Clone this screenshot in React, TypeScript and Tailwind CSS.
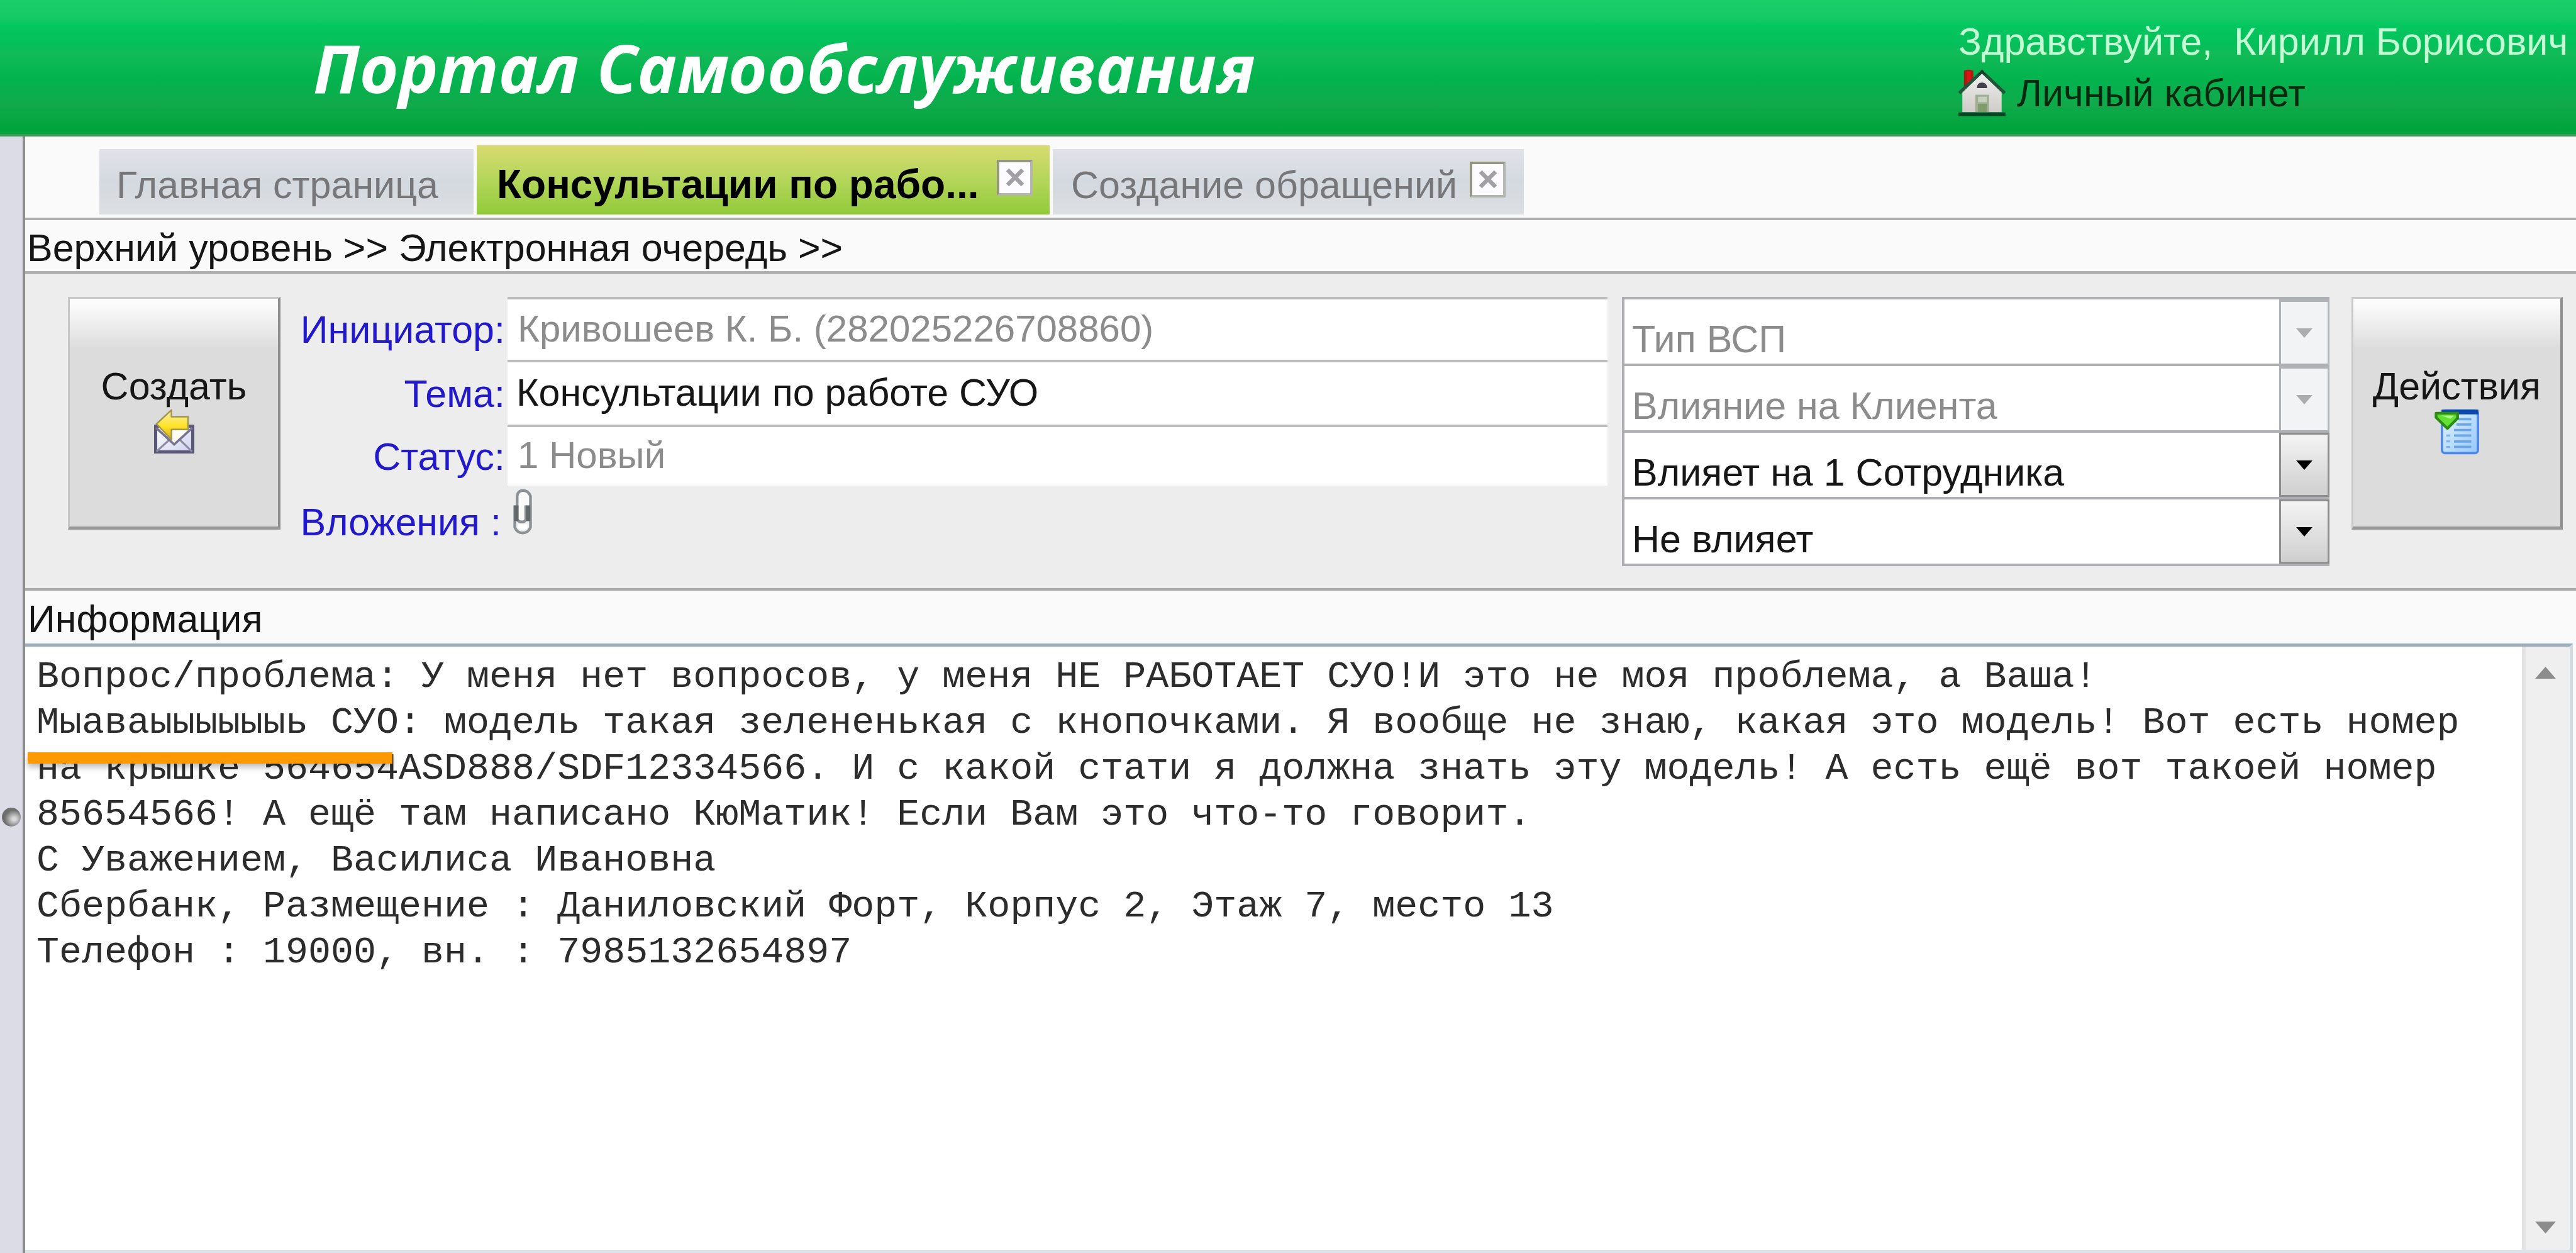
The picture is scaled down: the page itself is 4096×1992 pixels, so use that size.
import React from "react";

const MESSAGE = [
  "Вопрос/проблема: У меня нет вопросов, у меня НЕ РАБОТАЕТ СУО!И это не моя проблема, а Ваша!",
  "Мыаваыыыыыыь СУО: модель такая зелененькая с кнопочками. Я вообще не знаю, какая это модель! Вот есть номер",
  "на крышке 564654ASD888/SDF12334566. И с какой стати я должна знать эту модель! А есть ещё вот такоей номер",
  "85654566! А ещё там написано КюМатик! Если Вам это что-то говорит.",
  "С Уважением, Василиса Ивановна",
  "Сбербанк, Размещение : Даниловский Форт, Корпус 2, Этаж 7, место 13",
  "Телефон : 19000, вн. : 7985132654897",
].join("\n");

function HouseIcon() {
  return (
    <svg viewBox="0 0 120 122" className="h-[77px] w-[75px] shrink-0" aria-hidden="true">
      <defs>
        <linearGradient id="wall" x1="0" y1="0" x2="0" y2="1">
          <stop offset="0" stopColor="#f0f0f0" />
          <stop offset="1" stopColor="#cfcbc7" />
        </linearGradient>
      </defs>
      <path d="M14 5q10-6 24 0v26L14 52Z" fill="#a81c12" />
      <path d="M22 6h10v24L22 40Z" fill="#d81414" />
      <path d="M60 12 110 60v50H10V60Z" fill="url(#wall)" />
      <path d="M2 62 60 7l58 55" fill="none" stroke="#24543a" strokeWidth="8" />
      <path d="M60 3 48 16l12-5 12 5Z" fill="#103d28" />
      <path d="M47 49q0-14 13-14t13 14Z" fill="#45404c" />
      <path d="M43 66h35v44H43Z" fill="#9fae94" />
      <path d="M50 71h22v14H50Z" fill="#c3d2b9" />
      <path d="M50 89h22v21H50Z" fill="#7f9d6c" />
      <path d="M0 111h120v9H0Z" fill="#06451f" />
    </svg>
  );
}

function MailReplyIcon() {
  return (
    <svg viewBox="0 0 102 113" className="h-[71px] w-[64px]" aria-hidden="true">
      <defs>
        <linearGradient id="arrow" x1="0" y1="0" x2="0" y2="1">
          <stop offset="0" stopColor="#f7efb0" />
          <stop offset="0.55" stopColor="#ffe326" />
          <stop offset="1" stopColor="#d9a814" />
        </linearGradient>
        <linearGradient id="paper" x1="0" y1="0" x2="1" y2="1">
          <stop offset="0" stopColor="#ffffff" />
          <stop offset="1" stopColor="#cfd2ee" />
        </linearGradient>
      </defs>
      <rect x="4" y="44" width="94" height="65" fill="url(#paper)" stroke="#5a5676" strokeWidth="8" />
      <path d="M6 108 39 78M96 108 65 78" stroke="#8c8ca6" strokeWidth="5" />
      <path d="M5 48 51 90 97 48" fill="#fffdf6" stroke="#77748f" strokeWidth="6" />
      <path d="M6 38 44 3v17h42v32H44v26Z" fill="url(#arrow)" stroke="#a09650" strokeWidth="4" strokeLinejoin="round" />
    </svg>
  );
}

function ListIcon() {
  return (
    <svg viewBox="0 0 114 117" className="h-[73px] w-[71px]" aria-hidden="true">
      <defs>
        <linearGradient id="sheet" x1="0" y1="0" x2="1" y2="1">
          <stop offset="0" stopColor="#e6f4ff" />
          <stop offset="1" stopColor="#93c8ff" />
        </linearGradient>
      </defs>
      <rect x="19" y="4" width="92" height="109" rx="8" fill="url(#sheet)" stroke="#5287ea" strokeWidth="6" />
      <path d="M18 2h94v12H18Z" fill="#0a46b0" />
      <path d="M60 26h34M56 40h38M50 54h44M50 68h44M50 83h44M50 97h44" stroke="#6da6e2" strokeWidth="6" />
      <path d="M30 68h10M30 83h10M30 97h10" stroke="#7fb2ee" strokeWidth="5" />
      <path d="M4 11h55v13L33 50 4 22Z" fill="#62e036" stroke="#2c8c14" strokeWidth="7" strokeLinejoin="round" />
      <path d="M17 17h33l-9 8Z" fill="#b3f58d" />
    </svg>
  );
}

function PaperclipIcon() {
  return (
    <svg viewBox="0 0 48 116" className="h-[73px] w-[30px]" aria-hidden="true">
      <rect x="12" y="6" width="28" height="76" rx="14" fill="#fafafa" />
      <path d="M4 42v56q6 14 20 14t20-14V18Q38 4 25 4T10 18v60q4 6 12 6t10-6V42" fill="none" stroke="#8b9194" strokeWidth="7" />
      <path d="M8 42v40M38 42v40" stroke="#62676a" strokeWidth="11" />
      <path d="M12 90h24v10q-12 10-24 0Z" fill="#fff" />
    </svg>
  );
}

function Triangle({ up, className }: { up?: boolean; className: string }) {
  return (
    <svg viewBox="0 0 10 6" preserveAspectRatio="none" className={className} aria-hidden="true">
      <path d={up ? "M5 0 10 6H0Z" : "M0 0h10L5 6Z"} fill="currentColor" />
    </svg>
  );
}

function CloseButton({ label }: { label: string }) {
  return (
    <button
      type="button"
      aria-label={label}
      className="mb-[8px] flex h-[57px] w-[57px] shrink-0 items-center justify-center border-4 border-[#b4b6ae] border-t-[#94967e] border-l-[#94967e] bg-[#fcfbff]"
    >
      <svg viewBox="0 0 10 10" className="size-[30px]" aria-hidden="true">
        <path d="m1 1 8 8M9 1 1 9" stroke="#a29fa6" strokeWidth="2.2" />
      </svg>
    </button>
  );
}

function Field({ id, label, value, disabled }: { id: string; label: string; value: string; disabled?: boolean }) {
  return (
    <>
      <label htmlFor={id} className="self-center pt-[4px] pr-[4px] text-right whitespace-nowrap text-[#2218cc]">
        {label}
      </label>
      <input
        id={id}
        defaultValue={value}
        disabled={disabled}
        className="h-full w-full min-w-0 border-t-4 border-[#bdbdbd] bg-white px-[14px] pb-[4px] text-[#161616] disabled:px-4 disabled:text-[60px] disabled:text-[#8c8c8c]"
      />
    </>
  );
}

function Choice({ label, value, disabled }: { label: string; value: string; disabled?: boolean }) {
  return (
    <div className="relative h-[106px]">
      <select
        aria-label={label}
        disabled={disabled}
        className="h-full w-full appearance-none border-4 border-b-0 border-[#adafb2] bg-white pt-[24px] pl-[12px] text-[#161616] disabled:text-[#8c8c8c] disabled:opacity-100"
      >
        <option>{value}</option>
      </select>
      <div
        className={
          disabled
            ? "pointer-events-none absolute top-1 right-0 bottom-0 flex w-[80px] items-center justify-center border-x-3 border-t-4 border-[#b0b2b5] bg-[#f2f3f4] text-[#adadad]"
            : "pointer-events-none absolute top-1 right-0 bottom-0 flex w-[80px] items-center justify-center border-3 border-[#8e8e8e] bg-linear-to-b from-[#f4f4f4] to-[#cfcfcf] text-black"
        }
      >
        <Triangle className="h-[15px] w-[26px]" />
      </div>
    </div>
  );
}

function BigButton({ label, className, children }: { label: string; className: string; children: React.ReactNode }) {
  return (
    <button
      type="button"
      className={
        "flex h-[370px] shrink-0 flex-col items-center border-t-3 border-r-4 border-b-5 border-l-3 border-t-[#c8c8c8] border-r-[#8e8e8e] border-b-[#979797] border-l-[#c8c8c8] bg-linear-to-b from-white via-[#dcdcdc] via-22% to-[#dcdcdc] pt-[103px] " +
        className
      }
    >
      <span className="leading-[72px]">{label}</span>
      {children}
    </button>
  );
}

export default function App() {
  return (
    <div className="flex min-h-screen flex-col overflow-hidden bg-[#fafafa] font-['Liberation_Sans',Arial,sans-serif] text-[61px] leading-[68px] text-[#161616]">
      <header className="flex h-[217px] items-center justify-between border-b-4 border-[#3f9a58] bg-[linear-gradient(to_bottom,#1ace68_0%,#14ca64_14%,#04c75f_18%,#04c05b_33%,#12bb58_40%,#02b44e_58%,#10aa4b_78%,#00a43c_97%)] pl-[498px]">
        <h1 className="font-['Open_Sans',sans-serif] text-[106px] leading-[120px] font-bold whitespace-nowrap text-white italic">
          Портал Самообслуживания
        </h1>
        <div className="w-[982px] leading-[82px] whitespace-nowrap">
          <p className="whitespace-pre text-[#c4ffd4]">Здравствуйте,  Кирилл Борисович</p>
          <a href="#cabinet" className="flex items-center gap-[18px] text-[#032a10]">
            <HouseIcon />
            Личный кабинет
          </a>
        </div>
      </header>

      <div className="flex flex-1">
        <aside className="flex w-[40px] shrink-0 flex-col items-center border-r-4 border-[#8f8f92] bg-[#dcdce6]">
          <button
            type="button"
            aria-label="Свернуть панель"
            className="mt-[1067px] size-[30px] rounded-full bg-radial-[at_65%_60%] from-[#d8d8d8] from-10% to-[#6f6f6f] to-55%"
          />
        </aside>

        <main className="flex min-w-0 flex-1 flex-col">
          <nav className="flex h-[133px] items-end gap-[5px] border-b-4 border-[#b0b0b2] pb-[5px] pl-[118px]">
            <a href="#home" className="flex h-[104px] w-[595px] items-center bg-linear-to-b from-[#e2e2e9] via-[#d4d9e0] to-[#dcdfe2] pt-[10px] pl-[27px] text-[#77777a]">
              Главная страница
            </a>
            <div className="flex h-[110px] w-[911px] items-center justify-between bg-linear-to-b from-[#d8da70] via-[#b4d65a] to-[#92ca38] pr-[27px] pl-[32px]">
              <a href="#consult" className="pt-[14px] text-[64px] font-bold whitespace-nowrap text-black">
                Консультации по рабо...
              </a>
              <CloseButton label="Закрыть вкладку Консультации" />
            </div>
            <div className="flex h-[104px] w-[749px] items-center justify-between bg-linear-to-b from-[#e2e2e9] via-[#d4d9e0] to-[#dcdfe2] pr-[29px] pl-[29px]">
              <a href="#create" className="pt-[10px] whitespace-nowrap text-[#77777a]">
                Создание обращений
              </a>
              <CloseButton label="Закрыть вкладку Создание обращений" />
            </div>
          </nav>

          <div className="flex h-[86px] items-center border-b-5 border-[#b0b0b0] pt-[6px] pl-[3px]">
            <p className="whitespace-nowrap">
              <a href="#top">Верхний уровень</a> &gt;&gt; <a href="#queue">Электронная очередь</a> &gt;&gt;
            </p>
          </div>

          <section className="flex h-[503px] items-start border-b-4 border-[#a9a9a9] bg-[#ededed] pt-[36px] pr-[21px] pl-[68px]">
            <BigButton label="Создать" className="w-[338px]">
              <MailReplyIcon />
            </BigButton>
            <div className="grid min-w-0 flex-1 grid-cols-[361px_1fr] grid-rows-[100px_103px_97px_112px]">
              <Field id="initiator" label="Инициатор:" value="Кривошеев К. Б. (282025226708860)" disabled />
              <Field id="subject" label="Тема:" value="Консультации по работе СУО" />
              <Field id="status" label="Статус:" value="1 Новый" disabled />
              <span className="self-center pt-[4px] pr-[10px] text-right whitespace-nowrap text-[#2218cc]">Вложения :</span>
              <button type="button" aria-label="Вложения" className="mt-[5px] ml-[9px] w-[30px] self-start">
                <PaperclipIcon />
              </button>
            </div>
            <div className="ml-[23px] w-[1125px] shrink-0 border-b-4 border-[#adafb2]">
              <Choice label="Тип ВСП" value="Тип ВСП" disabled />
              <Choice label="Влияние на Клиента" value="Влияние на Клиента" disabled />
              <Choice label="Влияние на сотрудников" value="Влияет на 1 Сотрудника" />
              <Choice label="Влияние на процессы" value="Не влияет" />
            </div>
            <BigButton label="Действия" className="ml-[35px] w-[336px]">
              <ListIcon />
            </BigButton>
          </section>

          <section className="flex flex-1 flex-col pr-[5px]">
            <label htmlFor="info" className="flex h-[84px] items-center pt-[6px] pl-[4px]">
              Информация
            </label>
            <div className="relative flex flex-1 border-t-5 border-r-5 border-b-5 border-t-[#9aabba] border-r-[#d3dbe1] border-b-[#dde4e9] bg-white">
              <textarea
                id="info"
                defaultValue={MESSAGE}
                className="block min-w-0 flex-1 resize-none overflow-hidden bg-white pt-[12px] pl-[18px] font-['Liberation_Mono','Courier_New',monospace] text-[60px] leading-[73px] whitespace-pre text-[#2c2c2c]"
              />
              <div className="flex w-[76px] flex-col items-center justify-between border-l-6 border-[#e4e4e4] bg-[#efefef] pt-[32px] pr-[8px] pb-[26px] text-[#8c8c8c]">
                <Triangle up className="h-[19px] w-[33px]" />
                <Triangle className="h-[19px] w-[33px]" />
              </div>
              <div className="absolute top-[168px] left-[4px] h-[18px] w-[580px] bg-[#ff9900] shadow-[0_6px_10px_rgba(0,0,0,0.25)]" />
            </div>
          </section>
        </main>
      </div>
    </div>
  );
}
